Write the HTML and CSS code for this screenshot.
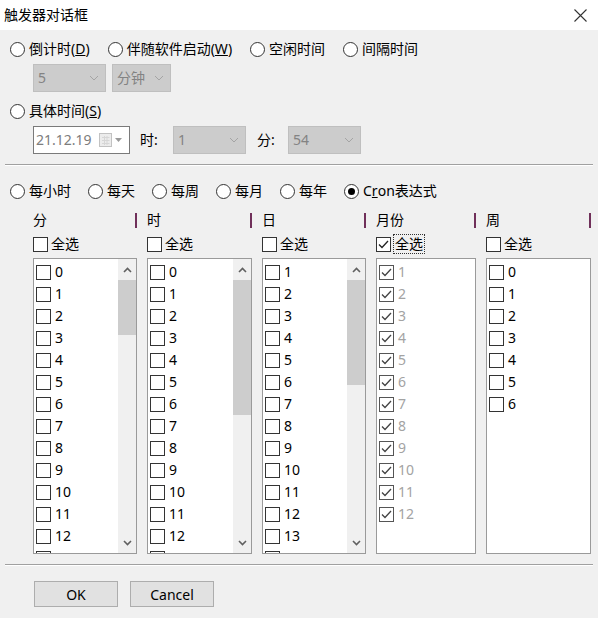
FILE: index.html
```html
<!DOCTYPE html>
<html lang="zh-CN">
<head>
    <meta charset="UTF-8">
    <meta name="viewport" content="width=device-width, initial-scale=1.0">
    <title>触发器对话框</title>
    <link rel="stylesheet" href="styles.css">
</head>
<body>
    <div class="window">
        <div class="titlebar">
            <span class="title">触发器对话框</span>
            <svg class="close" width="13" height="13" viewBox="0 0 13 13">
                <path d="M0.5 0.5 L12.5 12.5 M12.5 0.5 L0.5 12.5" stroke="#333" stroke-width="1.1" fill="none"/>
            </svg>
        </div>

        <div class="content">
            <div class="opts">
                <label class="opt"><span class="radio"></span>倒计时(<u>D</u>)</label>
                <label class="opt"><span class="radio"></span>伴随软件启动(<u>W</u>)</label>
                <label class="opt"><span class="radio"></span>空闲时间</label>
                <label class="opt"><span class="radio"></span>间隔时间</label>
            </div>
            <div class="fields">
                <div class="combo w73"><span>5</span>
                    <svg width="10" height="6" viewBox="0 0 10 6"><polyline points="1,1 5,5 9,1" fill="none" stroke="#a4a4a4" stroke-width="1"/></svg>
                </div>
                <div class="combo w59 gap6"><span>分钟</span>
                    <svg width="10" height="6" viewBox="0 0 10 6"><polyline points="1,1 5,5 9,1" fill="none" stroke="#a4a4a4" stroke-width="1"/></svg>
                </div>
            </div>

            <div class="opts spaced">
                <label class="opt"><span class="radio"></span>具体时间(<u>S</u>)</label>
            </div>
            <div class="fields">
                <div class="datefield">
                    <span>21.12.19</span>
                    <svg class="cal" width="24" height="14" viewBox="0 0 24 14">
                        <rect x="0.5" y="0.5" width="12" height="13" fill="#ececec" stroke="#c2c2c2"/>
                        <path d="M3 4.5 H10.5 M3 7.5 H10.5 M3 10.5 H10.5 M5.5 3 V12 M8 3 V12" stroke="#d6d6d6" stroke-width="1"/>
                        <polygon points="16,5 23,5 19.5,9" fill="#9a9a9a"/>
                    </svg>
                </div>
                <span class="flabel w33">时:</span>
                <div class="combo w73"><span>1</span>
                    <svg width="10" height="6" viewBox="0 0 10 6"><polyline points="1,1 5,5 9,1" fill="none" stroke="#a4a4a4" stroke-width="1"/></svg>
                </div>
                <span class="flabel w31 gap11">分:</span>
                <div class="combo w73"><span>54</span>
                    <svg width="10" height="6" viewBox="0 0 10 6"><polyline points="1,1 5,5 9,1" fill="none" stroke="#a4a4a4" stroke-width="1"/></svg>
                </div>
            </div>

            <div class="sep"></div>

            <div class="opts row2">
                <label class="opt"><span class="radio"></span>每小时</label>
                <label class="opt"><span class="radio"></span>每天</label>
                <label class="opt"><span class="radio"></span>每周</label>
                <label class="opt"><span class="radio"></span>每月</label>
                <label class="opt"><span class="radio"></span>每年</label>
                <label class="opt"><span class="radio on"><span class="dot"></span></span>C<u>r</u>on表达式</label>
            </div>

            <div class="cols">
                <!-- 分 -->
                <div class="col">
                    <div class="col-head"><span>分</span><i class="bar"></i></div>
                    <label class="check-all"><span class="box"></span>全选</label>
                    <div class="list">
                        <div class="items">
                            <div class="item"><span class="box"></span>0</div>
                            <div class="item"><span class="box"></span>1</div>
                            <div class="item"><span class="box"></span>2</div>
                            <div class="item"><span class="box"></span>3</div>
                            <div class="item"><span class="box"></span>4</div>
                            <div class="item"><span class="box"></span>5</div>
                            <div class="item"><span class="box"></span>6</div>
                            <div class="item"><span class="box"></span>7</div>
                            <div class="item"><span class="box"></span>8</div>
                            <div class="item"><span class="box"></span>9</div>
                            <div class="item"><span class="box"></span>10</div>
                            <div class="item"><span class="box"></span>11</div>
                            <div class="item"><span class="box"></span>12</div>
                            <div class="item"><span class="box"></span></div>
                        </div>
                        <div class="scrollbar">
                            <div class="sb-btn"><svg width="9" height="6" viewBox="0 0 9 6"><polyline points="1,5 4.5,1.5 8,5" fill="none" stroke="#606060" stroke-width="1.6"/></svg></div>
                            <div class="sb-track"><div class="thumb" style="height:55px"></div></div>
                            <div class="sb-btn"><svg width="9" height="6" viewBox="0 0 9 6"><polyline points="1,1 4.5,4.5 8,1" fill="none" stroke="#606060" stroke-width="1.6"/></svg></div>
                        </div>
                    </div>
                </div>

                <!-- 时 -->
                <div class="col">
                    <div class="col-head"><span>时</span><i class="bar"></i></div>
                    <label class="check-all"><span class="box"></span>全选</label>
                    <div class="list">
                        <div class="items">
                            <div class="item"><span class="box"></span>0</div>
                            <div class="item"><span class="box"></span>1</div>
                            <div class="item"><span class="box"></span>2</div>
                            <div class="item"><span class="box"></span>3</div>
                            <div class="item"><span class="box"></span>4</div>
                            <div class="item"><span class="box"></span>5</div>
                            <div class="item"><span class="box"></span>6</div>
                            <div class="item"><span class="box"></span>7</div>
                            <div class="item"><span class="box"></span>8</div>
                            <div class="item"><span class="box"></span>9</div>
                            <div class="item"><span class="box"></span>10</div>
                            <div class="item"><span class="box"></span>11</div>
                            <div class="item"><span class="box"></span>12</div>
                            <div class="item"><span class="box"></span></div>
                        </div>
                        <div class="scrollbar">
                            <div class="sb-btn"><svg width="9" height="6" viewBox="0 0 9 6"><polyline points="1,5 4.5,1.5 8,5" fill="none" stroke="#606060" stroke-width="1.6"/></svg></div>
                            <div class="sb-track"><div class="thumb" style="height:135px"></div></div>
                            <div class="sb-btn"><svg width="9" height="6" viewBox="0 0 9 6"><polyline points="1,1 4.5,4.5 8,1" fill="none" stroke="#606060" stroke-width="1.6"/></svg></div>
                        </div>
                    </div>
                </div>

                <!-- 日 -->
                <div class="col">
                    <div class="col-head"><span>日</span><i class="bar"></i></div>
                    <label class="check-all"><span class="box"></span>全选</label>
                    <div class="list">
                        <div class="items">
                            <div class="item"><span class="box"></span>1</div>
                            <div class="item"><span class="box"></span>2</div>
                            <div class="item"><span class="box"></span>3</div>
                            <div class="item"><span class="box"></span>4</div>
                            <div class="item"><span class="box"></span>5</div>
                            <div class="item"><span class="box"></span>6</div>
                            <div class="item"><span class="box"></span>7</div>
                            <div class="item"><span class="box"></span>8</div>
                            <div class="item"><span class="box"></span>9</div>
                            <div class="item"><span class="box"></span>10</div>
                            <div class="item"><span class="box"></span>11</div>
                            <div class="item"><span class="box"></span>12</div>
                            <div class="item"><span class="box"></span>13</div>
                            <div class="item"><span class="box"></span></div>
                        </div>
                        <div class="scrollbar">
                            <div class="sb-btn"><svg width="9" height="6" viewBox="0 0 9 6"><polyline points="1,5 4.5,1.5 8,5" fill="none" stroke="#606060" stroke-width="1.6"/></svg></div>
                            <div class="sb-track"><div class="thumb" style="height:105px"></div></div>
                            <div class="sb-btn"><svg width="9" height="6" viewBox="0 0 9 6"><polyline points="1,1 4.5,4.5 8,1" fill="none" stroke="#606060" stroke-width="1.6"/></svg></div>
                        </div>
                    </div>
                </div>

                <!-- 月份 -->
                <div class="col">
                    <div class="col-head"><span>月份</span><i class="bar"></i></div>
                    <label class="check-all"><span class="box on"><svg width="13" height="13" viewBox="0 0 13 13"><polyline points="2,6.5 5,9.5 11,3" fill="none" stroke="#222" stroke-width="1.3"/></svg></span><span class="focus">全选</span></label>
                    <div class="list">
                        <div class="items muted">
                            <div class="item"><span class="box on"><svg width="13" height="13" viewBox="0 0 13 13"><polyline points="2,6.5 5,9.5 11,3" fill="none" stroke="#444" stroke-width="1.3"/></svg></span>1</div>
                            <div class="item"><span class="box on"><svg width="13" height="13" viewBox="0 0 13 13"><polyline points="2,6.5 5,9.5 11,3" fill="none" stroke="#444" stroke-width="1.3"/></svg></span>2</div>
                            <div class="item"><span class="box on"><svg width="13" height="13" viewBox="0 0 13 13"><polyline points="2,6.5 5,9.5 11,3" fill="none" stroke="#444" stroke-width="1.3"/></svg></span>3</div>
                            <div class="item"><span class="box on"><svg width="13" height="13" viewBox="0 0 13 13"><polyline points="2,6.5 5,9.5 11,3" fill="none" stroke="#444" stroke-width="1.3"/></svg></span>4</div>
                            <div class="item"><span class="box on"><svg width="13" height="13" viewBox="0 0 13 13"><polyline points="2,6.5 5,9.5 11,3" fill="none" stroke="#444" stroke-width="1.3"/></svg></span>5</div>
                            <div class="item"><span class="box on"><svg width="13" height="13" viewBox="0 0 13 13"><polyline points="2,6.5 5,9.5 11,3" fill="none" stroke="#444" stroke-width="1.3"/></svg></span>6</div>
                            <div class="item"><span class="box on"><svg width="13" height="13" viewBox="0 0 13 13"><polyline points="2,6.5 5,9.5 11,3" fill="none" stroke="#444" stroke-width="1.3"/></svg></span>7</div>
                            <div class="item"><span class="box on"><svg width="13" height="13" viewBox="0 0 13 13"><polyline points="2,6.5 5,9.5 11,3" fill="none" stroke="#444" stroke-width="1.3"/></svg></span>8</div>
                            <div class="item"><span class="box on"><svg width="13" height="13" viewBox="0 0 13 13"><polyline points="2,6.5 5,9.5 11,3" fill="none" stroke="#444" stroke-width="1.3"/></svg></span>9</div>
                            <div class="item"><span class="box on"><svg width="13" height="13" viewBox="0 0 13 13"><polyline points="2,6.5 5,9.5 11,3" fill="none" stroke="#444" stroke-width="1.3"/></svg></span>10</div>
                            <div class="item"><span class="box on"><svg width="13" height="13" viewBox="0 0 13 13"><polyline points="2,6.5 5,9.5 11,3" fill="none" stroke="#444" stroke-width="1.3"/></svg></span>11</div>
                            <div class="item"><span class="box on"><svg width="13" height="13" viewBox="0 0 13 13"><polyline points="2,6.5 5,9.5 11,3" fill="none" stroke="#444" stroke-width="1.3"/></svg></span>12</div>
                        </div>
                    </div>
                </div>

                <!-- 周 -->
                <div class="col">
                    <div class="col-head"><span>周</span><i class="bar"></i></div>
                    <label class="check-all"><span class="box"></span>全选</label>
                    <div class="list">
                        <div class="items">
                            <div class="item"><span class="box"></span>0</div>
                            <div class="item"><span class="box"></span>1</div>
                            <div class="item"><span class="box"></span>2</div>
                            <div class="item"><span class="box"></span>3</div>
                            <div class="item"><span class="box"></span>4</div>
                            <div class="item"><span class="box"></span>5</div>
                            <div class="item"><span class="box"></span>6</div>
                        </div>
                    </div>
                </div>
            </div>

            <div class="sep low"></div>

            <div class="buttons">
                <button class="btn">OK</button>
                <button class="btn">Cancel</button>
            </div>
        </div>
    </div>
</body>
</html>
```

FILE: styles.css
```css
body {
    margin: 0;
    padding: 0;
    background-color: #fff;
    font-family: "Noto Sans", "Noto Sans CJK SC", sans-serif;
    font-size: 14px;
    color: #000;
    overflow: hidden;
}
.window {
    width: 600px;
    height: 618px;
    display: flex;
    flex-direction: column;
}
.titlebar {
    height: 30px;
    flex-shrink: 0;
    background-color: #fff;
    display: flex;
    align-items: center;
    justify-content: space-between;
    padding: 0 13px 0 4px;
}
.title {
    line-height: 20px;
}
.content {
    flex: 1;
    background-color: #f0f0f0;
    margin-right: 2px;
    padding-top: 8px;
}

/* radio rows */
.opts {
    display: flex;
    align-items: center;
    height: 22px;
    padding-left: 10px;
    line-height: 20px;
}
.opts.spaced {
    margin-top: 8px;
}
.opts.row2 {
    margin-top: 14px;
}
.opts.row2 .opt {
    margin-right: 17px;
}
.opt {
    display: flex;
    align-items: center;
    margin-right: 18px;
    white-space: nowrap;
}
.radio {
    width: 15px;
    height: 15px;
    box-sizing: border-box;
    border: 1px solid #333;
    border-radius: 50%;
    background-color: #fff;
    margin-right: 4px;
    display: flex;
    align-items: center;
    justify-content: center;
}
.radio .dot {
    width: 7px;
    height: 7px;
    border-radius: 50%;
    background-color: #000;
}

/* combos and fields */
.fields {
    display: flex;
    align-items: center;
    margin-top: 4px;
    padding-left: 33px;
    height: 28px;
}
.combo {
    height: 28px;
    box-sizing: border-box;
    border: 1px solid #bfbfbf;
    background-color: #cccccc;
    color: #838383;
    display: flex;
    align-items: center;
    justify-content: space-between;
    padding: 0 6px 0 4px;
    line-height: 20px;
}
.w73 { width: 73px; }
.w59 { width: 59px; }
.gap6 { margin-left: 6px; }
.datefield {
    width: 97px;
    height: 28px;
    box-sizing: border-box;
    border: 1px solid #7a7a7a;
    background-color: #fff;
    color: #7d7d7d;
    display: flex;
    align-items: center;
    justify-content: space-between;
    padding: 0 6px 0 2px;
    line-height: 20px;
}
.flabel {
    display: block;
    box-sizing: border-box;
    line-height: 20px;
}
.w33 { width: 43px; padding-left: 10px; }
.w31 { width: 31px; }
.gap11 { margin-left: 11px; }

.sep {
    margin: 10px 5px 0 5px;
    border-top: 1px solid #a0a0a0;
    border-bottom: 1px solid #fff;
}
.sep.low {
    margin-top: 10px;
}

/* cron columns */
.cols {
    display: grid;
    grid-template-columns: 104px 105px 104px 100px 105px;
    column-gap: 10px;
    padding-left: 33px;
    margin-top: 8px;
}
.col-head {
    height: 20px;
    display: flex;
    align-items: center;
    justify-content: space-between;
    line-height: 20px;
}
.bar {
    width: 2px;
    height: 15px;
    background-color: #70305a;
}
.check-all {
    display: flex;
    align-items: center;
    height: 20px;
    margin-top: 4px;
    line-height: 20px;
}
.box {
    width: 15px;
    height: 15px;
    box-sizing: border-box;
    border: 1px solid #333;
    background-color: #fff;
    margin-right: 3px;
    flex-shrink: 0;
    display: flex;
    align-items: center;
    justify-content: center;
}
.focus {
    outline: 1px dotted #333;
    outline-offset: 0;
    padding: 0 1px;
    line-height: 18px;
}
.list {
    margin-top: 4px;
    height: 296px;
    box-sizing: border-box;
    border: 1px solid #9a9a9a;
    background-color: #fff;
    display: flex;
}
.items {
    flex: 1;
    overflow: hidden;
    padding: 2px 0 0 2px;
}
.item {
    height: 22px;
    display: flex;
    align-items: center;
    line-height: 20px;
}
.item .box {
    margin-right: 4px;
}
.muted {
    color: #a3a3a3;
}
.muted .box {
    border-color: #555;
}
.scrollbar {
    width: 18px;
    background-color: #f0f0f0;
    display: flex;
    flex-direction: column;
}
.sb-btn {
    height: 21px;
    display: flex;
    align-items: center;
    justify-content: center;
}
.sb-track {
    flex: 1;
}
.thumb {
    background-color: #cdcdcd;
}

/* buttons */
.buttons {
    display: flex;
    gap: 12px;
    padding-left: 34px;
    margin-top: 15px;
}
.btn {
    width: 84px;
    height: 26px;
    box-sizing: border-box;
    border: 1px solid #adadad;
    background-color: #e1e1e1;
    font-family: inherit;
    font-size: 14px;
    color: #000;
    padding: 0;
}
```
